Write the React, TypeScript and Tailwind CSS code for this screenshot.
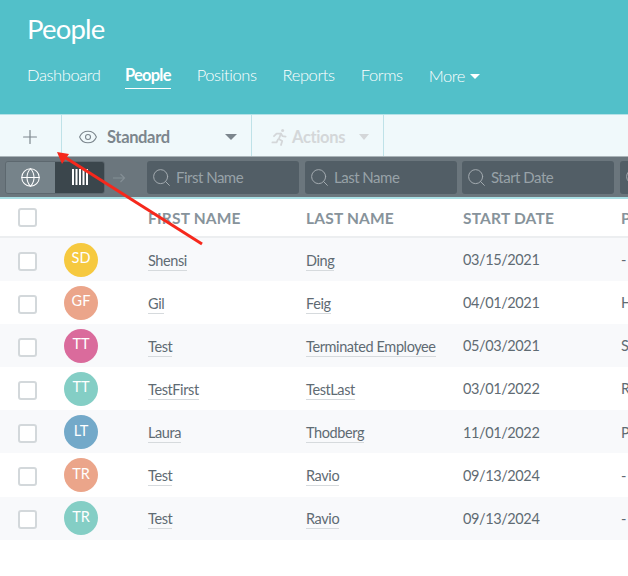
import { Eye, Globe, Plus, Search } from "lucide-react";

const navItems = ["Dashboard", "People", "Positions", "Reports", "Forms"];

const people = [
  { initials: "SD", color: "bg-[#f6c93f]", first: "Shensi", last: "Ding", date: "03/15/2021", pos: "-" },
  { initials: "GF", color: "bg-[#eba58a]", first: "Gil", last: "Feig", date: "04/01/2021", pos: "H" },
  { initials: "TT", color: "bg-[#da6b9c]", first: "Test", last: "Terminated Employee", date: "05/03/2021", pos: "S" },
  { initials: "TT", color: "bg-[#84cec5]", first: "TestFirst", last: "TestLast", date: "03/01/2022", pos: "R" },
  { initials: "LT", color: "bg-[#73a9c9]", first: "Laura", last: "Thodberg", date: "11/01/2022", pos: "P" },
  { initials: "TR", color: "bg-[#eba58a]", first: "Test", last: "Ravio", date: "09/13/2024", pos: "-" },
  { initials: "TR", color: "bg-[#84cec5]", first: "Test", last: "Ravio", date: "09/13/2024", pos: "-" },
];

function FilterBox({ label, className }: { label: string; className: string }) {
  return (
    <div className={`flex h-[33px] shrink-0 items-center gap-[4px] rounded-[3px] bg-[#525e66] pl-[4px] ${className}`}>
      <Search size={21} strokeWidth={1.1} className="shrink-0 text-[#a5adb2]" />
      <span className="text-[15px] tracking-[-0.5px] text-[#98a2a8]">{label}</span>
    </div>
  );
}

function Checkbox() {
  return <div className="h-[19px] w-[19px] rounded-[3px] border-2 border-[#d3d8db] bg-white" />;
}

export default function App() {
  return (
    <div className="relative h-[576px] w-[628px] overflow-hidden bg-white font-['Lato','Noto_Sans',sans-serif]">
      <header className="h-[114px] bg-[#52c0c9] pl-[27px] text-white">
        <h1 className="pt-[12px] text-[27.5px] leading-[34px] tracking-[-0.8px]">People</h1>
        <nav className="mt-[17px] flex gap-[26px] text-[16.5px] leading-[24px] tracking-[-0.4px]">
          {navItems.map((item) =>
            item === "People" ? (
              <span key={item} className="-ml-[1.5px] h-[26px] border-b border-white font-bold tracking-[-0.8px]">
                {item}
              </span>
            ) : (
              <span key={item} className="font-light">
                {item}
              </span>
            ),
          )}
          <span className="flex items-center gap-[5px] font-light">
            More
            <span className="h-0 w-0 border-x-[5px] border-t-[5px] border-x-transparent border-t-white" />
          </span>
        </nav>
      </header>

      <div className="flex h-[42px] border-t border-[#b5e2e7] bg-[#f0f9fb] text-[16.5px] font-bold tracking-[-0.35px]">
        <div className="flex w-[62px] items-center justify-center border-r border-[#bfe2e8] pr-[2px] pt-[3px]">
          <Plus size={22} strokeWidth={1.3} className="text-[#7c868d]" />
        </div>
        <div className="flex w-[190px] items-center border-r border-[#bfe2e8] pl-[16px] pr-[14px] pt-[3px] text-[#7c868d]">
          <Eye size={20} strokeWidth={1.3} />
          <span className="ml-[9px] flex-1">Standard</span>
          <span className="h-0 w-0 border-x-[6px] border-t-[6px] border-x-transparent border-t-[#7c868d]" />
        </div>
        <div className="flex w-[132px] items-center border-r border-[#bfe2e8] pl-[18px] pr-[14px] pt-[3px] text-[#d4d7d9]">
          <svg width="18" height="18" viewBox="0 0 18 18" fill="none" stroke="currentColor" strokeWidth="1.8" strokeLinecap="round" strokeLinejoin="round" className="shrink-0">
            <circle cx="12.6" cy="2.6" r="1.5" fill="currentColor" stroke="none" />
            <path d="M4 8.2L6.6 5.6H11L8.8 11L12.2 13L11 17" />
            <path d="M11 5.6L12.6 8.2L15.6 8.6" />
            <path d="M8 11.4L6.6 14.4H2.4" />
          </svg>
          <span className="ml-[4px] flex-1">Actions</span>
          <span className="h-0 w-0 border-x-[5px] border-t-[6px] border-x-transparent border-t-[#d4d7d9]" />
        </div>
      </div>

      <div className="flex h-[41px] items-center border-t border-[#aab4b8] bg-[#6b767d] pl-[5px]">
        <div className="flex h-[33px] w-[100px] shrink-0 overflow-hidden rounded-[3px] border border-[#5d686f]">
          <div className="flex w-[49px] items-center justify-center bg-[#76838a]">
            <Globe size={21} strokeWidth={1.2} className="text-white" />
          </div>
          <div className="flex flex-1 items-center justify-center bg-[#3b464c]">
            <svg width="16" height="16" viewBox="0 0 16 16" fill="white">
              <rect x="0" width="2" height="16" />
              <rect x="3.5" width="2" height="16" />
              <rect x="7" width="2" height="16" />
              <rect x="10.5" width="2" height="16" />
              <rect x="14" width="2" height="16" />
            </svg>
          </div>
        </div>
        <svg width="14" height="10" viewBox="0 0 14 10" className="ml-[7px] mr-[21px] mt-[2px] shrink-0 text-[#848f95]" fill="none" stroke="currentColor" strokeWidth="1.2">
          <path d="M1 5h11.5M8.5 1l4 4-4 4" />
        </svg>
        <FilterBox label="First Name" className="w-[152px]" />
        <FilterBox label="Last Name" className="ml-[6px] w-[152px]" />
        <FilterBox label="Start Date" className="ml-[5px] w-[152px]" />
        <FilterBox label="" className="ml-[6px] w-[60px]" />
      </div>

      <div className="border-t-2 border-[#a9dfe4]">
        <div className="grid h-[39px] grid-cols-[46px_84px_158px_157px_158px_20px] items-center border-b-2 border-[#eceef0] pl-[18px] text-[15.5px] font-bold tracking-[0.2px] text-[#87939b]">
          <div className="pb-[1px]">
            <Checkbox />
          </div>
          <span />
          <span className="pt-[3px]">FIRST NAME</span>
          <span className="pt-[3px]">LAST NAME</span>
          <span className="pt-[3px]">START DATE</span>
          <span className="pt-[3px]">P</span>
        </div>
        {people.map((p, i) => (
          <div
            key={i}
            className={`grid h-[43.1px] grid-cols-[46px_84px_158px_157px_158px_20px] items-center pl-[18px] text-[14.5px] tracking-[-0.4px] text-[#5f6b73] ${i % 2 === 0 ? "bg-[#f8f9fb]" : "bg-white"}`}
          >
            <div className="pt-[3px]">
              <Checkbox />
            </div>
            <div className={`flex h-[34px] w-[34px] items-center justify-center rounded-full pb-[3px] text-[14.5px] tracking-normal text-white ${p.color}`}>
              {p.initials}
            </div>
            <div className="pt-[2px]">
              <span className="border-b border-[#d6dadd] pb-[1px]">{p.first}</span>
            </div>
            <div className="pt-[2px]">
              <span className="border-b border-[#d6dadd] pb-[1px]">{p.last}</span>
            </div>
            <span className="pt-[1px]">{p.date}</span>
            <span className="pt-[1px]">{p.pos}</span>
          </div>
        ))}
      </div>

      <svg width="628" height="576" viewBox="0 0 628 576" className="pointer-events-none absolute left-0 top-0">
        <path d="M202 244L66 158" stroke="#f6281c" strokeWidth="3" />
        <path d="M57 152L69 154L62 164Z" fill="#f6281c" />
      </svg>
    </div>
  );
}
